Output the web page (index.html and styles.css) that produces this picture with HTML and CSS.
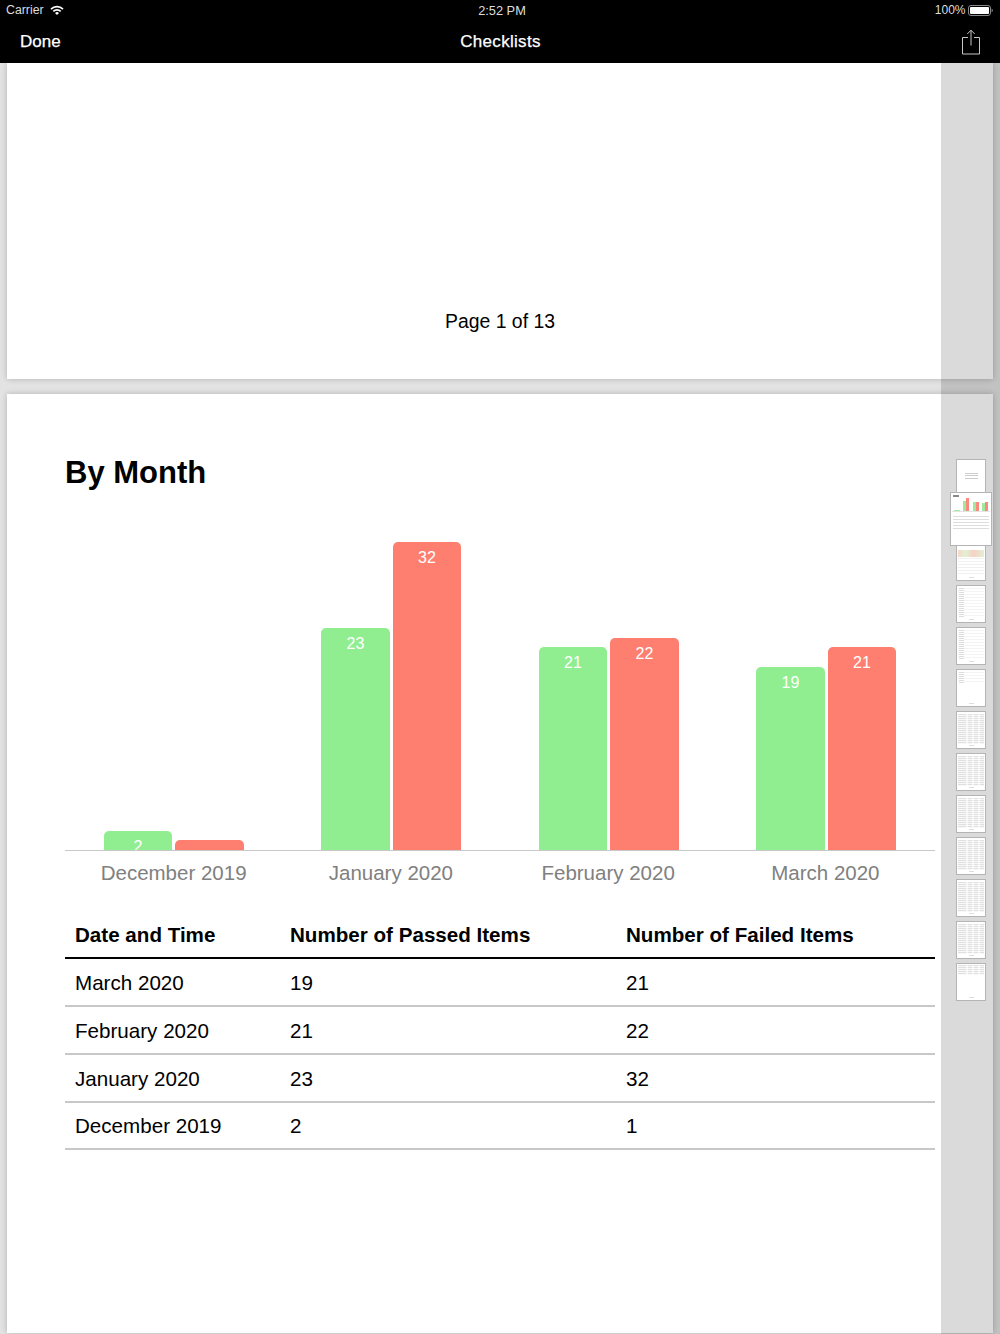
FILE: index.html
```html
<!DOCTYPE html>
<html lang="en">
<head>
<meta charset="utf-8">
<title>Checklists</title>
<link rel="stylesheet" href="styles.css">
</head>
<body>
<div class="app">
  <header class="top">
    <div class="status">
      <div class="status-left">
        <span>Carrier</span>
        <svg class="wifi" width="14" height="10" viewBox="0 0 14 10"><path d="M0.4 3.4a9.5 9.5 0 0 1 13.2 0l-1.2 1.3a7.8 7.8 0 0 0-10.8 0z" fill="#fff"/><path d="M2.7 5.7a6.2 6.2 0 0 1 8.6 0l-1.2 1.3a4.4 4.4 0 0 0-6.2 0z" fill="#fff"/><path d="M5 8a2.9 2.9 0 0 1 4 0l-2 2z" fill="#fff"/></svg>
      </div>
      <div class="status-time">2:52 PM</div>
      <div class="status-right">
        <span>100%</span>
        <svg class="battery" width="25" height="11" viewBox="0 0 25 11"><rect x="0.5" y="0.5" width="22" height="10" rx="2.5" fill="none" stroke="#888"/><rect x="2" y="2" width="19" height="7" rx="1" fill="#fff"/><path d="M23.6 3.8c.8.2 1.2.8 1.2 1.7s-.4 1.5-1.2 1.7z" fill="#888"/></svg>
      </div>
    </div>
    <nav class="nav">
      <span class="nav-btn">Done</span>
      <span class="nav-title">Checklists</span>
      <svg class="share" width="20" height="26" viewBox="0 0 20 26"><path d="M7 8.5H1.5v16.5h17V8.5H13" fill="none" stroke="#c8c8c8"/><path d="M10 1.5V16.5" stroke="#c8c8c8" fill="none"/><path d="M6.3 5L10 1.2 13.7 5" stroke="#c8c8c8" fill="none"/></svg>
    </nav>
  </header>

  <main class="doc">
    <section class="page page-first">
      <p class="page-num">Page 1 of 13</p>
    </section>
    <section class="page page-second">
      <h1 class="heading">By Month</h1>
      <div class="chart">
        <div class="plot">
          <div class="group">
            <div class="bar pass" style="height:19px">2</div>
            <div class="bar fail" style="height:10px"></div>
          </div>
          <div class="group">
            <div class="bar pass" style="height:222px">23</div>
            <div class="bar fail" style="height:308px">32</div>
          </div>
          <div class="group">
            <div class="bar pass" style="height:203px">21</div>
            <div class="bar fail" style="height:212px">22</div>
          </div>
          <div class="group">
            <div class="bar pass" style="height:183px">19</div>
            <div class="bar fail" style="height:203px">21</div>
          </div>
        </div>
        <div class="axis">
          <span>December 2019</span>
          <span>January 2020</span>
          <span>February 2020</span>
          <span>March 2020</span>
        </div>
      </div>
      <table class="data">
        <thead>
          <tr><th class="c1">Date and Time</th><th class="c2">Number of Passed Items</th><th class="c3">Number of Failed Items</th></tr>
        </thead>
        <tbody>
          <tr><td>March 2020</td><td>19</td><td>21</td></tr>
          <tr><td>February 2020</td><td>21</td><td>22</td></tr>
          <tr><td>January 2020</td><td>23</td><td>32</td></tr>
          <tr><td>December 2019</td><td>2</td><td>1</td></tr>
        </tbody>
      </table>
    </section>
  </main>

  <aside class="strip">
    <div class="thumb t-cover"><i></i></div>
    <div class="thumb"></div>
    <div class="thumb t-mixed"></div>
    <div class="thumb t-rows"></div>
    <div class="thumb t-rows"></div>
    <div class="thumb t-rows-short"></div>
    <div class="thumb t-dense"></div>
    <div class="thumb t-dense"></div>
    <div class="thumb t-dense"></div>
    <div class="thumb t-dense"></div>
    <div class="thumb t-dense"></div>
    <div class="thumb t-dense"></div>
    <div class="thumb t-dense-short"></div>
    <div class="thumb-current">
      <div class="mini-title"></div>
      <div class="mini-chart">
        <div class="mini-group"><b class="mg" style="height:1px"></b></div>
        <div class="mini-group"><b class="mg" style="height:10px"></b><b class="mr" style="height:13px"></b></div>
        <div class="mini-group"><b class="mg" style="height:9px"></b><b class="mr" style="height:9px"></b></div>
        <div class="mini-group"><b class="mg" style="height:8px"></b><b class="mr" style="height:9px"></b></div>
      </div>
      <div class="mini-table"></div>
    </div>
  </aside>
</div>
</body>
</html>
```
FILE: styles.css
```css
* { box-sizing: border-box; }
html, body { margin: 0; padding: 0; }
body { font-family: "Liberation Sans", Arial, sans-serif; background: #e3e3e3; color: #000; }

.app { position: relative; width: 1000px; height: 1334px; overflow: hidden; display: flex; flex-direction: column; }

.top { background: #000; color: #fff; height: 63px; flex: none; position: relative; z-index: 3; }
.status { height: 20px; display: grid; grid-template-columns: 1fr auto 1fr; align-items: center; padding: 0 8px 0 6px; font-size: 12.3px; color: #ddd; }
.status-left { display: flex; align-items: center; gap: 6px; }
.status-time { font-size: 12.8px; padding-left: 6px; }
.status-right { display: flex; justify-content: flex-end; align-items: center; gap: 2.5px; margin-right: -1px; font-size: 12px; }
.nav { height: 43px; display: grid; grid-template-columns: 1fr auto 1fr; align-items: center; padding: 0 19px 0 20px; font-size: 17px; }
.nav-btn, .nav-title { -webkit-text-stroke: 0.25px #fff; }
.nav-title { letter-spacing: 0.3px; }
.share { justify-self: end; }

.doc { flex: 1; padding: 0 7px; display: flex; flex-direction: column; gap: 15px; min-height: 0; }
.page { background: #fff; box-shadow: 0 0 6px rgba(0,0,0,.22); flex: none; }
.page-first { height: 316px; display: flex; justify-content: center; align-items: flex-end; }
.page-num { margin: 0 0 46px; font-size: 19.4px; line-height: 24px; }
.page-second { height: 939px; padding: 0 58px; }

.heading { margin: 0; padding-top: 59px; font-size: 31px; line-height: 40px; font-weight: 700; }

.chart { margin-top: 49px; }
.plot { height: 309px; display: grid; grid-template-columns: repeat(4, 1fr); border-bottom: 1.5px solid #c8c8c8; }
.group { display: flex; justify-content: center; align-items: flex-end; gap: 3px; }
.bar { width: 68.5px; border-radius: 5px 5px 0 0; color: #fff; font-size: 16px; line-height: 18px; padding-top: 7px; text-align: center; overflow: hidden; }
.pass { background: #90ee90; }
.fail { background: #fe7f70; }
.axis { display: grid; grid-template-columns: repeat(4, 1fr); text-align: center; color: #808080; font-size: 20.5px; line-height: 24px; margin: 10px 1px 0 0; }

.data { width: 870px; margin-top: 27px; border-collapse: collapse; table-layout: fixed; font-size: 20.6px; }
.data th { text-align: left; font-weight: 700; height: 46px; padding: 0 0 0 10px; border-bottom: 2px solid #000; }
.data td { height: 47.85px; padding: 2px 0 0 10px; border-bottom: 2px solid #c8c8c8; }
.c1 { width: 215px; }
.c2 { width: 336px; }
.c3 { width: 319px; }

.strip { position: absolute; z-index: 2; top: 63px; right: 0; bottom: 0; width: 59px; background: rgba(0,0,0,.145); display: flex; flex-direction: column; align-items: flex-start; gap: 4px; padding: 396px 0 0 15px; }
.thumb { width: 30px; height: 38px; flex: none; background-color: #fff; border: 1px solid #b4b4b4; background-repeat: no-repeat; }
.t-cover { display: flex; justify-content: center; align-items: center; }
.t-cover i { display: block; width: 13px; height: 6px; margin-bottom: 4px; background: repeating-linear-gradient(#ccc 0 1px, transparent 1px 2.5px); }
.t-mixed { background-image: linear-gradient(90deg, #f8d8cc, #e0f0d4 30%, #f8d0c4 60%, #e0f0d4), repeating-linear-gradient(#f0f0f0 0 1px, #fff 1px 3px), linear-gradient(#ddd, #ddd); background-size: 26px 7px, 26px 17px, 5px 1px; background-position: 1px 6px, 1px 14px, center 33px; }
.t-rows { background-image: repeating-linear-gradient(#ddd 0 1px, #fff 1px 2px), repeating-linear-gradient(#f4f4f4 0 1px, #fff 1px 3px), linear-gradient(#ddd, #ddd); background-size: 5px 30px, 26px 30px, 5px 1px; background-position: 2px 2px, 1px 2px, center 33px; }
.t-rows-short { background-image: repeating-linear-gradient(#ddd 0 1px, #fff 1px 2px), repeating-linear-gradient(#f4f4f4 0 1px, #fff 1px 3px), linear-gradient(#ddd, #ddd); background-size: 5px 11px, 26px 11px, 5px 1px; background-position: 2px 2px, 1px 2px, center 33px; }
.t-dense { background-image: linear-gradient(90deg, transparent 0 8px, rgba(255,255,255,.6) 8px 10px, transparent 10px 14px, rgba(255,255,255,.6) 14px 16px, transparent 16px 20px, rgba(255,255,255,.6) 20px 22px, transparent 22px), repeating-linear-gradient(#e0e0e0 0 1px, #f8f8f8 1px 2px), linear-gradient(#ddd, #ddd); background-size: 26px 30px, 26px 30px, 5px 1px; background-position: 1px 2px, 1px 2px, center 33px; }
.t-dense-short { background-image: linear-gradient(90deg, transparent 0 8px, rgba(255,255,255,.6) 8px 10px, transparent 10px 14px, rgba(255,255,255,.6) 14px 16px, transparent 16px 20px, rgba(255,255,255,.6) 20px 22px, transparent 22px), repeating-linear-gradient(#e0e0e0 0 1px, #f8f8f8 1px 2px), linear-gradient(#ddd, #ddd); background-size: 26px 10px, 26px 10px, 5px 1px; background-position: 1px 1px, 1px 1px, center 33px; }

.thumb-current { position: absolute; left: 9px; top: 429px; width: 42px; height: 54px; background: #fff; border: 1px solid #b4b4b4; padding: 2px 1px; }
.mini-title { width: 6px; height: 2px; margin-left: 1px; background: #888; }
.mini-chart { display: grid; grid-template-columns: repeat(4, 9.5px); height: 14px; border-bottom: 1px solid #e4e4e4; margin-top: 1px; }
.mini-group { display: flex; justify-content: center; align-items: flex-end; }
.mg { background: #9ee99e; display: block; width: 3.2px; }
.mr { background: #fb8a7c; display: block; width: 3.2px; }
.mini-group:first-child .mg { width: 6px; }
.mini-table { height: 14px; margin: 4px 1px 0; background: repeating-linear-gradient(#ddd 0 1px, #fff 1px 3px); }
```
